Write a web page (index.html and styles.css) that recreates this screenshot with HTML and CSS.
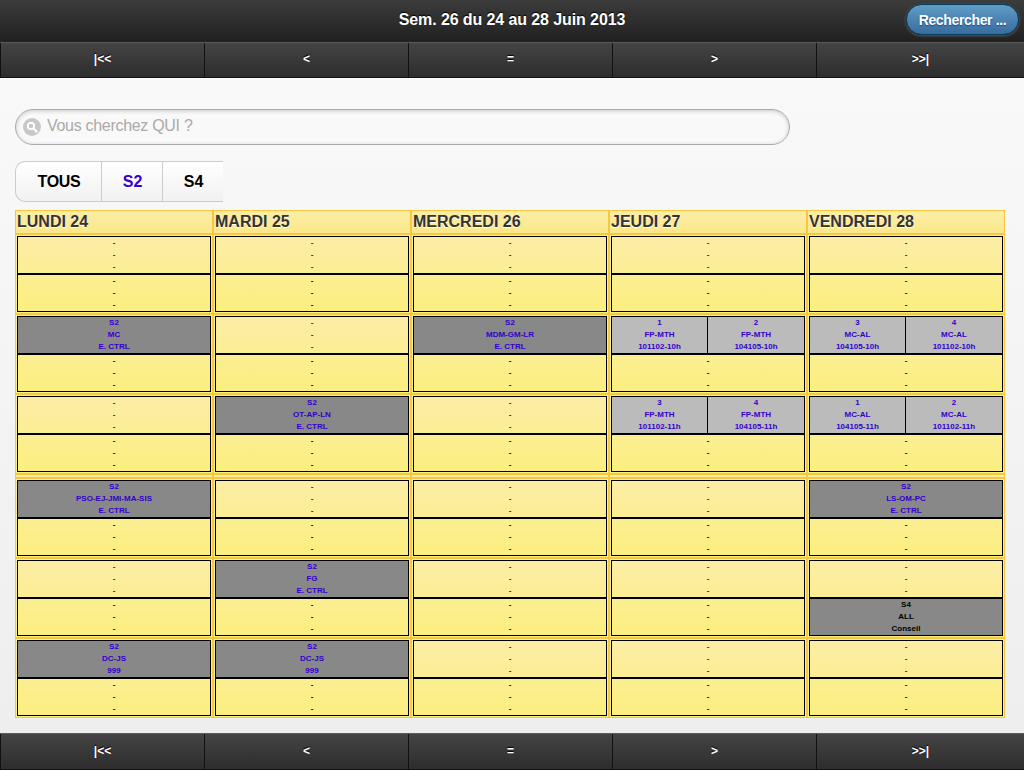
FILE: index.html
```
<!DOCTYPE html>
<html lang="fr">
<head>
<meta charset="utf-8">
<title>Emploi du temps</title>
<link rel="stylesheet" href="styles.css">
</head>
<body>
<header class="topbar">
  <h1 class="title">Sem. 26 du 24 au 28 Juin 2013</h1>
  <a class="search-btn">Rechercher ...</a>
</header>
<nav class="navbar">
  <a class="nav-item">|&lt;&lt;</a><a class="nav-item">&lt;</a><a class="nav-item">=</a><a class="nav-item">&gt;</a><a class="nav-item">&gt;&gt;|</a>
</nav>
<main class="content">
  <div class="search">
    <svg class="search-icon" width="18" height="18" viewBox="0 0 18 18"><circle cx="9" cy="9" r="9" fill="#c8c8c8"/><circle cx="8" cy="8" r="3.2" fill="none" stroke="#fff" stroke-width="1.8"/><path d="M10.5 10.5L13.6 13.6" stroke="#fff" stroke-width="2.2" stroke-linecap="round"/></svg>
    <input class="search-input" type="text" placeholder="Vous cherchez QUI ?">
  </div>
  <div class="filters">
    <a class="filter filter-first">TOUS</a><a class="filter filter-blue">S2</a><a class="filter">S4</a>
  </div>
  <div class="schedule">
    <div class="day">LUNDI 24</div><div class="day">MARDI 25</div><div class="day">MERCREDI 26</div><div class="day">JEUDI 27</div><div class="day">VENDREDI 28</div>

    <div class="cell"><div class="half am">-<br>-<br>-</div><div class="half">-<br>-<br>-</div></div>
    <div class="cell"><div class="half am">-<br>-<br>-</div><div class="half">-<br>-<br>-</div></div>
    <div class="cell"><div class="half am">-<br>-<br>-</div><div class="half">-<br>-<br>-</div></div>
    <div class="cell"><div class="half am">-<br>-<br>-</div><div class="half">-<br>-<br>-</div></div>
    <div class="cell"><div class="half am">-<br>-<br>-</div><div class="half">-<br>-<br>-</div></div>

    <div class="cell"><div class="half am busy">S2<br>MC<br>E. CTRL</div><div class="half">-<br>-<br>-</div></div>
    <div class="cell"><div class="half am">-<br>-<br>-</div><div class="half">-<br>-<br>-</div></div>
    <div class="cell"><div class="half am busy">S2<br>MDM-GM-LR<br>E. CTRL</div><div class="half">-<br>-<br>-</div></div>
    <div class="cell"><div class="half am split"><div class="sub">1<br>FP-MTH<br>101102-10h</div><div class="sub">2<br>FP-MTH<br>104105-10h</div></div><div class="half">-<br>-<br>-</div></div>
    <div class="cell"><div class="half am split"><div class="sub">3<br>MC-AL<br>104105-10h</div><div class="sub">4<br>MC-AL<br>101102-10h</div></div><div class="half">-<br>-<br>-</div></div>

    <div class="cell"><div class="half am">-<br>-<br>-</div><div class="half">-<br>-<br>-</div></div>
    <div class="cell"><div class="half am busy">S2<br>OT-AP-LN<br>E. CTRL</div><div class="half">-<br>-<br>-</div></div>
    <div class="cell"><div class="half am">-<br>-<br>-</div><div class="half">-<br>-<br>-</div></div>
    <div class="cell"><div class="half am split"><div class="sub">3<br>FP-MTH<br>101102-11h</div><div class="sub">4<br>FP-MTH<br>104105-11h</div></div><div class="half">-<br>-<br>-</div></div>
    <div class="cell"><div class="half am split"><div class="sub">1<br>MC-AL<br>104105-11h</div><div class="sub">2<br>MC-AL<br>101102-11h</div></div><div class="half">-<br>-<br>-</div></div>

    <div class="gap"></div><div class="gap"></div><div class="gap"></div><div class="gap"></div><div class="gap"></div>

    <div class="cell"><div class="half am busy">S2<br>PSO-EJ-JMI-MA-SIS<br>E. CTRL</div><div class="half">-<br>-<br>-</div></div>
    <div class="cell"><div class="half am">-<br>-<br>-</div><div class="half">-<br>-<br>-</div></div>
    <div class="cell"><div class="half am">-<br>-<br>-</div><div class="half">-<br>-<br>-</div></div>
    <div class="cell"><div class="half am">-<br>-<br>-</div><div class="half">-<br>-<br>-</div></div>
    <div class="cell"><div class="half am busy">S2<br>LS-OM-PC<br>E. CTRL</div><div class="half">-<br>-<br>-</div></div>

    <div class="cell"><div class="half am">-<br>-<br>-</div><div class="half">-<br>-<br>-</div></div>
    <div class="cell"><div class="half am busy">S2<br>FG<br>E. CTRL</div><div class="half">-<br>-<br>-</div></div>
    <div class="cell"><div class="half am">-<br>-<br>-</div><div class="half">-<br>-<br>-</div></div>
    <div class="cell"><div class="half am">-<br>-<br>-</div><div class="half">-<br>-<br>-</div></div>
    <div class="cell"><div class="half am">-<br>-<br>-</div><div class="half busy">S4<br>ALL<br>Conseil</div></div>

    <div class="cell"><div class="half am busy">S2<br>DC-JS<br>999</div><div class="half">-<br>-<br>-</div></div>
    <div class="cell"><div class="half am busy">S2<br>DC-JS<br>999</div><div class="half">-<br>-<br>-</div></div>
    <div class="cell"><div class="half am">-<br>-<br>-</div><div class="half">-<br>-<br>-</div></div>
    <div class="cell"><div class="half am">-<br>-<br>-</div><div class="half">-<br>-<br>-</div></div>
    <div class="cell"><div class="half am">-<br>-<br>-</div><div class="half">-<br>-<br>-</div></div>
  </div>
</main>
<nav class="navbar navbar-bottom">
  <a class="nav-item">|&lt;&lt;</a><a class="nav-item">&lt;</a><a class="nav-item">=</a><a class="nav-item">&gt;</a><a class="nav-item">&gt;&gt;|</a>
</nav>
</body>
</html>
```
FILE: styles.css
```
* {
  box-sizing: border-box;
}

html, body {
  margin: 0;
  height: 770px;
  overflow: hidden;
}

body {
  display: flex;
  flex-direction: column;
  font-family: "Liberation Sans", Arial, sans-serif;
  background: #eee;
}

.topbar {
  height: 42px;
  flex: none;
  display: flex;
  align-items: center;
  justify-content: center;
  padding-bottom: 2px;
  position: relative;
  background: linear-gradient(#3c3c3c, #202020);
}

.title {
  margin: 0;
  font-size: 16px;
  font-weight: bold;
  letter-spacing: -0.1px;
  color: #fff;
  text-shadow: 0 -1px 1px #000;
}

.search-btn {
  position: absolute;
  left: 906px;
  top: 4px;
  width: 113px;
  height: 31px;
  border: 1px solid #044062;
  border-radius: 16px;
  background: linear-gradient(#5f9cc5, #396b9e);
  color: #fff;
  font-size: 14px;
  font-weight: bold;
  letter-spacing: -0.35px;
  line-height: 31px;
  text-align: center;
  text-shadow: 0 1px 1px #194b7e;
  box-shadow: 0 1px 3px rgba(255, 255, 255, .25);
}

.navbar {
  height: 36px;
  flex: none;
  display: flex;
  background: linear-gradient(#444, #2d2d2d);
  border-top: 1px solid #5a5a5a;
  border-bottom: 1px solid #111;
}

.navbar-bottom {
  height: 37px;
}

.nav-item {
  flex: 0 0 204px;
  border-left: 1px solid #111;
  color: #fff;
  font-size: 12px;
  font-weight: bold;
  text-align: center;
  line-height: 33px;
  text-shadow: 0 -1px 1px #000;
}

.nav-item:last-child {
  flex: 1;
}

.navbar-bottom .nav-item {
  line-height: 35px;
}

.content {
  flex: 1;
  min-height: 0;
  padding: 31px 19px 0 15px;
  background: linear-gradient(#f9f9f9, #eee);
}

.search {
  width: 775px;
  height: 36px;
  margin-bottom: 16px;
  display: flex;
  align-items: center;
  gap: 6px;
  padding: 0 0 1px 7px;
  border: 1px solid #aaa;
  border-radius: 18px;
  background: #f9f9f9;
  box-shadow: inset 0 1px 4px rgba(0, 0, 0, .2);
}

.search-icon {
  flex: none;
}

.search-input {
  flex: 1;
  min-width: 0;
  margin-bottom: 2px;
  border: 0;
  padding: 0;
  background: transparent;
  font: 16px "Liberation Sans", Arial, sans-serif;
  letter-spacing: -0.3px;
}

.search-input::placeholder {
  color: #aaa;
  opacity: 1;
}

.filters {
  width: 208px;
  height: 41px;
  margin-bottom: 8px;
  display: flex;
  border: 1px solid #ccc;
  border-right: 0;
  border-radius: 10px 0 0 10px;
  background: linear-gradient(#fff, #f1f1f1);
  overflow: hidden;
}

.filter {
  width: 61px;
  padding-left: 1px;
  border-left: 1px solid #ccc;
  color: #000;
  font-size: 16px;
  font-weight: bold;
  line-height: 39px;
  text-align: center;
  text-shadow: 0 1px 0 #fff;
}

.filter-first {
  width: 85px;
  border-left: 0;
  letter-spacing: -0.3px;
}

.filter-blue {
  color: #30c;
}

.schedule {
  display: grid;
  grid-template-columns: repeat(5, 198px);
  grid-auto-rows: 80px;
  grid-template-rows: 24px 80px 80px 80px 4px;
}

.day {
  padding-left: 1px;
  border: 1px solid #f8c740;
  background: linear-gradient(#fceda7, #fbe88a);
  color: #333;
  font-size: 16px;
  font-weight: bold;
  line-height: 22px;
  white-space: nowrap;
  text-shadow: 0 1px 0 #fff;
}

.gap {
  border: 1px solid #f8c740;
  background: #fceda7;
}

.cell {
  padding: 1px;
  border: 1px solid #f8c740;
  background: linear-gradient(#fceda7, #fbef7e);
}

.half {
  height: 38px;
  border: 1px solid #000;
  color: #000;
  font-size: 8px;
  font-weight: bold;
  line-height: 12px;
  text-align: center;
}

.am {
  color: #30c;
}

.busy {
  background: #888;
}

.split {
  display: flex;
  background: #bbb;
}

.sub {
  flex: 0 0 50%;
}

.sub:first-child {
  border-right: 1px solid #000;
}
```
